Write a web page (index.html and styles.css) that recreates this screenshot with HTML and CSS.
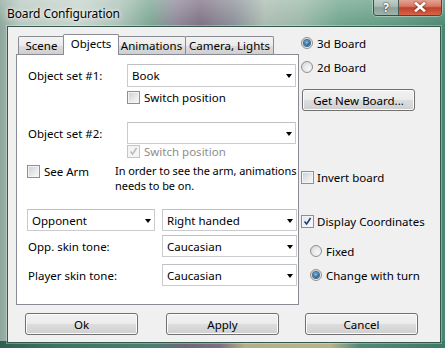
FILE: index.html
```html
<!DOCTYPE html>
<html>
<head>
<meta charset="utf-8">
<link rel="stylesheet" href="styles.css">
</head>
<body>
<div class="window">
  <div class="titlebar">
    <span class="title">Board Configuration</span>
    <div class="caption">
      <div class="cbtn help">?</div>
      <div class="cbtn close"><svg width="12" height="10" viewBox="0 0 12 10"><path d="M2 1.5 L10 8.5 M10 1.5 L2 8.5" stroke="#fff" stroke-width="2.6" stroke-linecap="square"/></svg></div>
    </div>
  </div>
  <div class="client">
    <div class="main">
      <div class="tabctl">
        <div class="tabs">
          <div class="tab w-scene">Scene</div>
          <div class="tab active w-obj">Objects</div>
          <div class="tab w-anim">Animations</div>
          <div class="tab w-cam">Camera, Lights</div>
        </div>
        <div class="panel">
          <div class="row r-set1">
            <span class="lbl lbl-set">Object set #1:</span>
            <div class="combo c-set h23"><span>Book</span><i class="arrow"></i></div>
          </div>
          <div class="chkrow r-sw1"><span class="cb"></span><span class="ctext">Switch position</span></div>
          <div class="row r-set2">
            <span class="lbl lbl-set">Object set #2:</span>
            <div class="combo c-set"><span></span><i class="arrow"></i></div>
          </div>
          <div class="chkrow r-sw2 disabled"><span class="cb checked"><svg width="9" height="9" viewBox="0 0 9 9"><path d="M1.5 4.5 L3.6 7 L7.6 1" fill="none" stroke="#b9b9b9" stroke-width="1.4"/></svg></span><span class="ctext">Switch position</span></div>
          <div class="armrow">
            <div class="chkrow arm"><span class="cb"></span><span class="ctext">See Arm</span></div>
            <div class="note">In order to see the arm, animations<br>needs to be on.</div>
          </div>
          <div class="row r-opp">
            <div class="combo c-opp"><span>Opponent</span><i class="arrow"></i></div>
            <div class="combo c-hand"><span>Right handed</span><i class="arrow"></i></div>
          </div>
          <div class="row r-skin1">
            <span class="lbl lbl-skin">Opp. skin tone:</span>
            <div class="combo c-hand"><span>Caucasian</span><i class="arrow"></i></div>
          </div>
          <div class="row r-skin2">
            <span class="lbl lbl-skin">Player skin tone:</span>
            <div class="combo c-hand"><span>Caucasian</span><i class="arrow"></i></div>
          </div>
        </div>
      </div>
      <div class="side">
        <div class="opt s-3d"><span class="rb on"></span><span class="rtext">3d Board</span></div>
        <div class="opt s-2d"><span class="rb"></span><span class="rtext">2d Board</span></div>
        <div class="btn s-get">Get New Board...</div>
        <div class="opt s-inv"><span class="cb"></span><span class="ctext">Invert board</span></div>
        <div class="opt s-disp"><span class="cb checked"><svg width="9" height="9" viewBox="0 0 9 9"><path d="M1.5 4.5 L3.6 7 L7.6 1" fill="none" stroke="#22347a" stroke-width="1.5"/></svg></span><span class="ctext">Display Coordinates</span></div>
        <div class="opt s-fixed"><span class="rb"></span><span class="rtext">Fixed</span></div>
        <div class="opt s-turn"><span class="rb on"></span><span class="rtext">Change with turn</span></div>
      </div>
    </div>
    <div class="buttons">
      <div class="btn b-ok">Ok</div>
      <div class="btn b-apply">Apply</div>
      <div class="btn b-cancel">Cancel</div>
    </div>
  </div>
</div>
</body>
</html>
```

FILE: styles.css
```css
* { box-sizing: border-box; }
html, body { margin: 0; padding: 0; }
body {
  width: 445px;
  height: 348px;
  overflow: hidden;
  font-family: "Segoe UI", "Noto Sans", "Open Sans", sans-serif;
  font-size: 11.5px;
  color: #000;
  background:
    linear-gradient(90deg, #2c6152 0, #3a7664 60px, #4a7f70 150px, #6d6779 185px, #7a7183 220px, #b2b088 245px, #b8b58e 330px, #4f8a74 360px, #3d7a66 445px) left bottom / 100% 7px no-repeat,
    linear-gradient(180deg, rgba(255,255,255,0.25) 0, rgba(255,255,255,0) 27px),
    linear-gradient(90deg, #8ca79c 0, #b7c8c0 20px, #c6d3cc 80px, #aac1b6 120px, #7aa692 150px, #8d8799 175px, #7d6f84 200px, #8b8f98 235px, #a9bbb0 265px, #9ab7a7 300px, #6da48c 340px, #5d977f 400px, #4b8670 445px);
}
.window { width: 445px; height: 348px; }

.titlebar {
  height: 27px;
  display: flex;
  justify-content: space-between;
  align-items: flex-start;
  padding-left: 7px;
  padding-right: 3px;
}
.title {
  font-size: 12px;
  line-height: 16px;
  margin-top: 6px;
  letter-spacing: -0.1px;
  color: #000;
  text-shadow: 0 0 6px rgba(255,255,255,0.9), 0 0 3px rgba(255,255,255,0.8);
}
.caption {
  display: flex;
  height: 17px;
  margin-top: -1px;
  border: 1px solid #3c4d47;
  border-top: none;
  border-radius: 0 0 4px 4px;
  overflow: hidden;
  box-shadow: 0 0 0 1px rgba(255,255,255,0.35);
}
.cbtn {
  height: 16px;
  display: flex;
  align-items: center;
  justify-content: center;
}
.help {
  width: 25px;
  border-right: 1px solid #4a5a55;
  background: linear-gradient(180deg, #c5d2cd 0, #a9bbb4 45%, #8aa199 55%, #9fb4ac 100%);
  color: #fff;
  font-weight: bold;
  font-size: 12px;
  text-shadow: 0 0 2px #333, 0 0 1px #333;
}
.close {
  width: 42px;
  background: linear-gradient(180deg, #e6a99b 0, #d77a66 45%, #c1412a 55%, #d8644a 100%);
}
.close svg { filter: drop-shadow(0 0 1px #5a1a10); }

.client {
  margin-left: 8px;
  width: 432px;
  height: 315px;
  background: #f0f0f0;
  box-shadow: 0 0 0 1px #35574c, 0 0 0 2px rgba(255,255,255,0.3);
  padding-top: 7px;
  padding-left: 8px;
}
.main { display: flex; align-items: flex-start; }

.tabctl { width: 283px; }
.tabs {
  display: flex;
  align-items: flex-end;
  height: 20px;
  padding-left: 2px;
  position: relative;
  z-index: 1;
}
.tab {
  height: 18px;
  border: 1px solid #898c95;
  border-bottom: none;
  background: linear-gradient(180deg, #f3f3f3 0, #ebebeb 50%, #dddddd 51%, #cfcfcf 100%);
  text-align: center;
  line-height: 17px;
  margin-left: -1px;
  border-radius: 2px 2px 0 0;
}
.tab:first-child { margin-left: 0; }
.tab.active {
  height: 21px;
  margin-bottom: -1px;
  margin-left: -2px;
  margin-right: -1px;
  background: #fff;
  line-height: 18px;
  position: relative;
  z-index: 2;
}
.w-scene { width: 47px; }
.w-obj { width: 56px; }
.w-anim { width: 69px; }
.w-cam { width: 89px; }

.panel {
  height: 251px;
  border: 1px solid #898c95;
  background: #fff;
  padding: 9px 0 0 10px;
}
.row { display: flex; align-items: center; }
.lbl { white-space: nowrap; padding-left: 1px; }
.lbl-set { width: 100px; }
.lbl-skin { width: 135px; }

.combo {
  height: 22px;
  border: 1px solid #c9cbcf;
  border-top-color: #bfc1c5;
  background: #fff;
  display: flex;
  align-items: center;
  justify-content: space-between;
  padding: 0 3px 0 4px;
  white-space: nowrap;
}
.combo.h23 { height: 23px; }
.c-set { width: 169px; }
.c-opp { width: 128px; margin-right: 7px; }
.c-hand { width: 135px; }
.arrow {
  width: 0; height: 0;
  border-left: 3.5px solid transparent;
  border-right: 3.5px solid transparent;
  border-top: 4px solid #000;
  margin-top: 1px;
}

.chkrow { display: flex; align-items: center; height: 13px; }
.r-sw1 { margin-left: 100px; margin-top: 4px; }
.r-set2 { margin-top: 18px; }
.r-sw2 { margin-left: 100px; margin-top: 1px; }
.disabled .ctext { color: #8d8d8d; }

.cb {
  width: 13px; height: 13px;
  flex: none;
  border: 1px solid #8e8f8f;
  background: linear-gradient(135deg, #cbced4 0, #e9eaec 60%, #f8f8f8 100%);
  box-shadow: inset 0 0 0 1px #f4f4f4;
  display: flex; align-items: center; justify-content: center;
}
.cb.checked { background: linear-gradient(135deg, #dfe3ea 0, #f3f4f6 60%, #fbfbfb 100%); }
.disabled .cb { border-color: #c5c5c5; background: #f4f4f4; }
.ctext { margin-left: 4px; white-space: nowrap; line-height: 15px; }

.armrow { display: flex; align-items: flex-start; margin-top: 5px; }
.arm { width: 88px; margin-top: 2px; flex: none; }
.note { line-height: 15px; white-space: nowrap; font-size: 11px; letter-spacing: -0.05px; }

.r-opp { margin-top: 16px; }
.r-skin1 { margin-top: 4px; }
.r-skin2 { margin-top: 7px; }

.side { margin-left: 2px; display: flex; flex-direction: column; align-items: flex-start; }
.opt { display: flex; align-items: center; height: 16px; }
.s-3d { margin-top: 1px; }
.s-2d { margin-top: 8px; }
.s-get { margin-top: 14px; margin-left: 1px; }
.s-inv { margin-top: 58px; }
.s-disp { margin-top: 28px; }
.s-fixed { margin-top: 14px; margin-left: 9px; }
.s-turn { margin-top: 8px; margin-left: 9px; }
.rtext { margin-left: 4px; white-space: nowrap; }
.s-inv .ctext, .s-disp .ctext { margin-left: 3px; }

.rb {
  width: 12px; height: 12px;
  flex: none;
  border-radius: 50%;
  border: 1px solid #8e8f8f;
  background: radial-gradient(circle at 65% 65%, #f8f8f8 0, #e6e7e9 50%, #c9ccd1 100%);
  display: flex; align-items: center; justify-content: center;
}
.rb.on::after {
  content: "";
  width: 6px; height: 6px;
  border-radius: 50%;
  background: radial-gradient(circle at 45% 40%, #8cc4ef 0, #2e6c9e 55%, #0f3352 100%);
  box-shadow: 0 0 0 1px #4b6c86;
}

.btn {
  width: 113px;
  height: 22px;
  border: 1px solid #707070;
  border-radius: 3px;
  background: linear-gradient(180deg, #f2f2f2 0, #ebebeb 48%, #dddddd 52%, #cfcfcf 100%);
  box-shadow: inset 0 0 0 1px #fbfbfb;
  display: flex; align-items: center; justify-content: center;
  white-space: nowrap;
}
.buttons { display: flex; margin-top: 8px; }
.b-ok { margin-left: 9px; }
.b-apply { margin-left: 28px; }
.b-cancel { margin-left: 26px; }
```
